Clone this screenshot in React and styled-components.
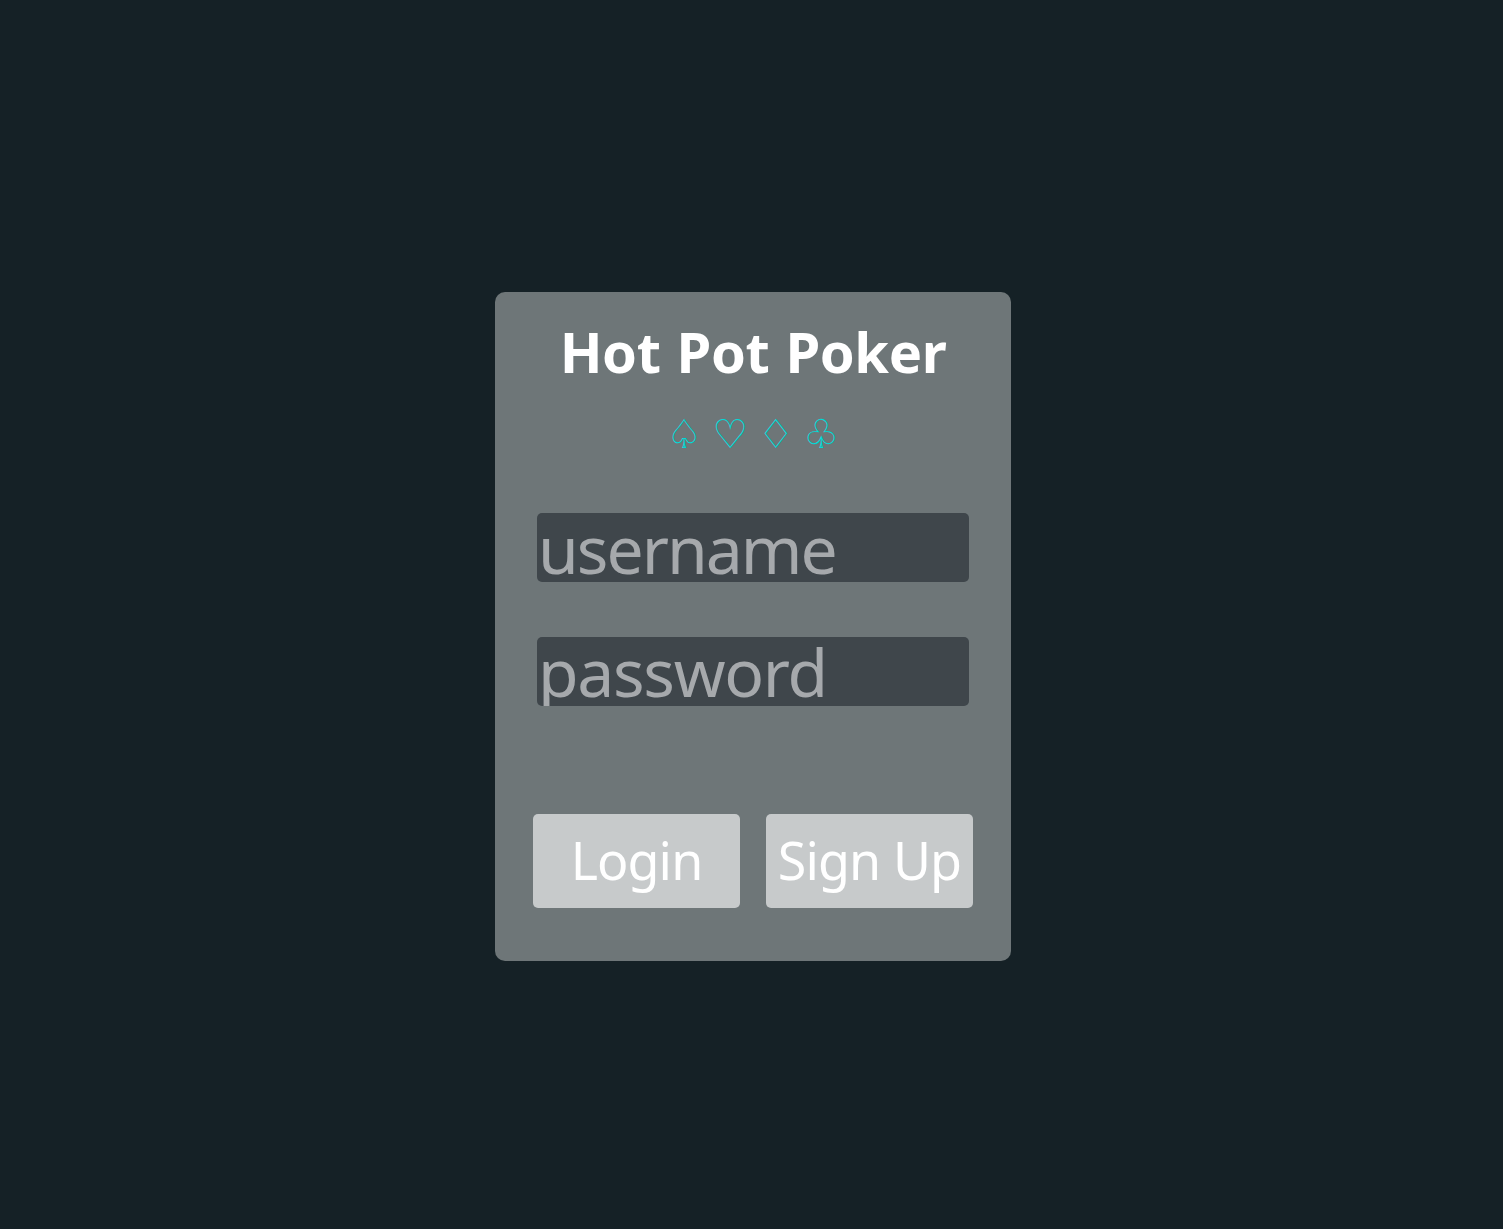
import React from "react";
import styled, { createGlobalStyle } from "styled-components";

const GlobalStyle = createGlobalStyle`
  * { box-sizing: border-box; }
  body {
    margin: 0;
    background: #152126;
    color: #fff;
    font-family: "Noto Sans", "Open Sans", sans-serif;
  }
`;

const Page = styled.main`
  min-height: 100vh;
  display: flex;
  justify-content: center;
  align-items: flex-start;
  padding: 292px 0 0 3px;
`;

const Card = styled.form`
  width: 516px;
  height: 669px;
  border-radius: 10px;
  background: #6e7678;
  display: flex;
  flex-direction: column;
  align-items: center;
  padding-top: 21px;
`;

const Title = styled.h1`
  margin: 0;
  font-size: 56px;
  line-height: 76px;
  font-weight: 700;
  letter-spacing: -0.4px;
  word-spacing: 1.8px;
  white-space: nowrap;
`;

const Suits = styled.div`
  display: flex;
  gap: 9.8px;
  height: 48px;
  margin-top: 21px;
  line-height: 48px;
  font-family: "DejaVu Sans", sans-serif;
  font-size: 40px;
  color: #00dbd9;
`;

const Fields = styled.div`
  display: flex;
  flex-direction: column;
  gap: 55px;
  margin-top: 55px;
`;

const Field = styled.input`
  display: block;
  width: 432px;
  height: 69px;
  border: 0;
  border-radius: 5px;
  padding: 0 2px ${(p) => p.$lift || "0"} 1px;
  background: #3f464b;
  color: #fff;
  font-family: inherit;
  font-size: 66px;
  letter-spacing: ${(p) => p.$tracking};
  outline: none;

  &::placeholder {
    color: #a6a9ac;
    opacity: 1;
  }
`;

const Actions = styled.div`
  display: flex;
  gap: 26px;
  margin-top: 108px;
`;

const Button = styled.button`
  width: 207px;
  height: 94px;
  border: 0;
  border-radius: 5px;
  padding: 0 0 2px;
  background: #c7cacb;
  color: #fff;
  font-family: inherit;
  font-size: 52px;
  line-height: 92px;
  letter-spacing: -0.9px;
  white-space: nowrap;
`;

export default function App() {
  return (
    <>
      <GlobalStyle />
      <Page>
        <Card onSubmit={(e) => e.preventDefault()}>
          <Title>Hot Pot Poker</Title>
          <Suits>
            <span>♤</span>
            <span>♡</span>
            <span>♢</span>
            <span>♧</span>
          </Suits>
          <Fields>
            <Field type="text" placeholder="username" $tracking="-2px" />
            <Field type="password" placeholder="password" $tracking="-1.3px" $lift="2px" />
          </Fields>
          <Actions>
            <Button type="submit">Login</Button>
            <Button type="button">Sign Up</Button>
          </Actions>
        </Card>
      </Page>
    </>
  );
}
